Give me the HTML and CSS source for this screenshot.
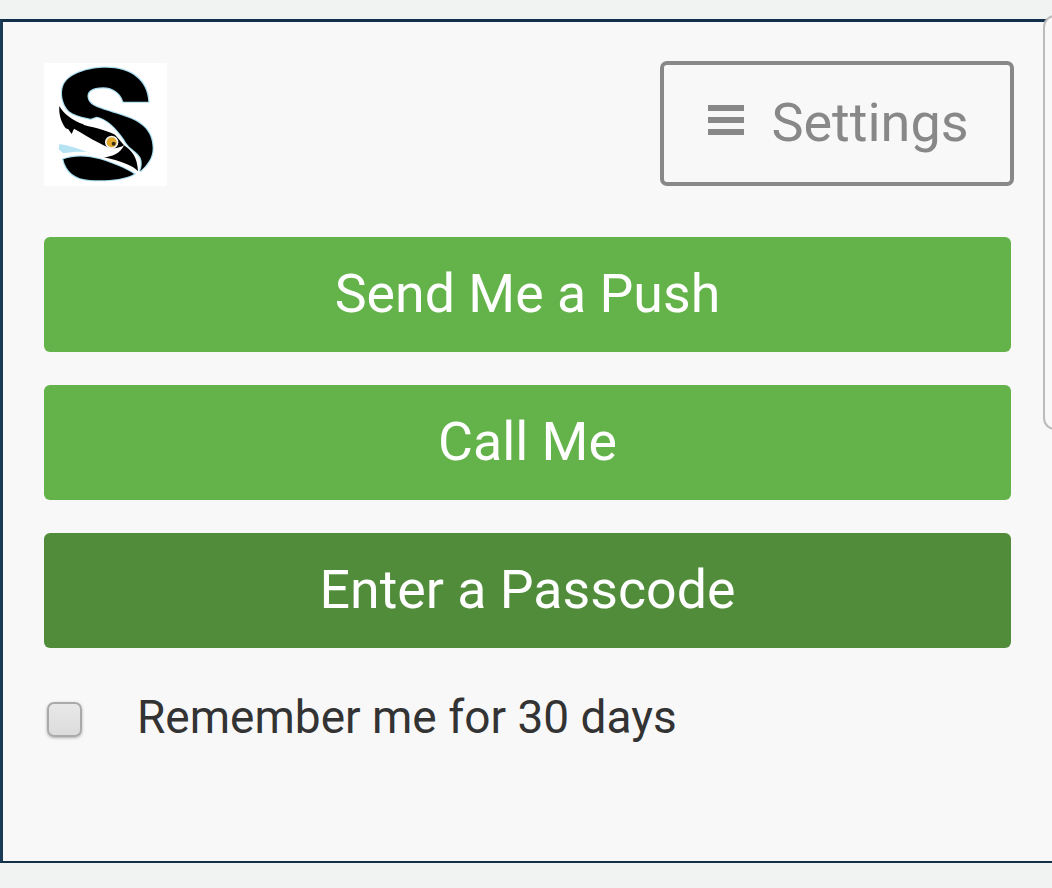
FILE: index.html
```html
<!DOCTYPE html>
<html lang="en">
<head>
    <meta charset="UTF-8">
    <title>Two-factor prompt</title>
    <link rel="stylesheet" href="styles.css">
</head>
<body>
<div class="panel">
    <div class="top">
        <div class="logo">
            <svg viewBox="132 189 369 369" width="123" height="123">
                <rect x="132" y="189" width="369" height="369" fill="#fff"/>
                <path class="glow" d="M445 305H370C360 275 335 262 310 262C275 262 255 275 265 300C272 318 300 325 340 338C400 355 458 375 458 445C458 475 440 497 420 514C428 495 426 480 420 470C405 450 385 445 372 418C350 385 320 355 290 350L272 356L245 350C225 345 208 338 200 325C183 300 183 270 192 252C210 220 265 203 318 203C392 203 442 240 445 305Z"/>
                <path class="glow" d="M190 478C225 465 265 468 300 478C340 490 375 505 402 522C370 540 320 542 270 540C225 538 198 515 190 478Z"/>
                <path d="M445 305H370C360 275 335 262 310 262C275 262 255 275 265 300C272 318 300 325 340 338C400 355 458 375 458 445C458 475 440 497 420 514C428 495 426 480 420 470C405 450 385 445 372 418C350 385 320 355 290 350L272 356L245 350C225 345 208 338 200 325C183 300 183 270 192 252C210 220 265 203 318 203C392 203 442 240 445 305Z"/>
                <path d="M178 318C192 342 215 360 250 373L262 388L240 372C270 380 320 390 345 404L372 436C355 446 335 448 315 438C290 425 265 412 238 395L222 386L215 402L205 388L197 385C182 365 176 340 178 318Z"/>
                <path d="M372 436C395 452 412 470 414 514C400 498 365 483 312 472C335 470 360 462 372 436Z"/>
                <path d="M190 478C225 465 265 468 300 478C340 490 375 505 402 522C370 540 320 542 270 540C225 538 198 515 190 478Z"/>
                <path fill="#b5e3f3" d="M178 432C205 436 235 446 262 456C235 454 210 456 190 460L176 448Z"/>
                <circle cx="335" cy="427" r="20" fill="#f4f4f2"/>
                <circle cx="335" cy="427" r="15" fill="#e2a92c"/>
                <circle cx="341" cy="431" r="6" fill="#3a3114"/>
            </svg>
        </div>
        <button class="settings">
            <svg class="bars" viewBox="0 0 36 30" width="36" height="30">
                <rect y="0" width="36" height="6" fill="#888"/>
                <rect y="12" width="36" height="6" fill="#888"/>
                <rect y="24" width="36" height="6" fill="#888"/>
            </svg>
            <span>Settings</span>
        </button>
    </div>

    <button class="btn">Send Me a Push</button>
    <button class="btn">Call Me</button>
    <button class="btn dark">Enter a Passcode</button>

    <label class="remember">
        <input type="checkbox">
        <span>Remember me for 30 days</span>
    </label>

    <div class="edge"></div>
</div>
</body>
</html>
```

FILE: styles.css
```css
html, body {
    margin: 0;
    height: 888px;
    overflow: hidden;
    background: #f1f2f2;
}

body {
    padding-top: 19px;
    box-sizing: border-box;
    font-family: Roboto, sans-serif;
}

.panel {
    position: relative;
    box-sizing: border-box;
    height: 844px;
    background: #f8f8f9;
    border-top: 3px solid #12304a;
    border-bottom: 2px solid #12304a;
    border-left: 3px solid #1b3a55;
    padding: 39px 41px 0 41px;
}

.top {
    display: flex;
    justify-content: space-between;
    align-items: flex-start;
    margin-bottom: 51px;
}

.logo {
    margin-top: 2px;
    height: 123px;
}

.logo svg {
    display: block;
    filter: blur(0.5px);
}

.glow {
    fill: none;
    stroke: #a9def1;
    stroke-width: 7;
}

.settings {
    box-sizing: border-box;
    width: 354px;
    height: 125px;
    margin-right: -3px;
    background: transparent;
    border: 4px solid #888;
    border-radius: 7px;
    color: #888;
    font-family: Roboto, sans-serif;
    font-size: 54px;
    display: flex;
    align-items: center;
    justify-content: center;
    gap: 27px;
    padding: 0 0 2px 3px;
}

.bars {
    margin-bottom: 6px;
}

.btn {
    display: block;
    width: 967px;
    height: 115px;
    margin-bottom: 33px;
    background: #64b24a;
    border: none;
    border-radius: 6px;
    color: #fff;
    font-family: Roboto, sans-serif;
    font-size: 53.7px;
    padding: 0 0 3px;
}

.btn.dark {
    background: #508c3a;
}

.remember {
    display: flex;
    align-items: center;
    margin-top: 42px;
    font-size: 46px;
    color: #333;
}

.remember input {
    appearance: none;
    box-sizing: border-box;
    width: 35px;
    height: 35px;
    margin: 4px 55px 0 3px;
    background: linear-gradient(#e8e8e8, #dcdcdc);
    border: 2px solid #aaa;
    border-radius: 7px;
    box-shadow: 0 1px 3px rgba(0, 0, 0, 0.3);
}

.edge {
    position: absolute;
    top: -7px;
    right: -11px;
    width: 20px;
    height: 415px;
    border-left: 2px solid #bbb;
    border-bottom: 2px solid #bbb;
    border-top: 2px solid #bbb;
    border-radius: 12px 0 0 12px;
    box-sizing: border-box;
    background: #f8f8f9;
}
```
